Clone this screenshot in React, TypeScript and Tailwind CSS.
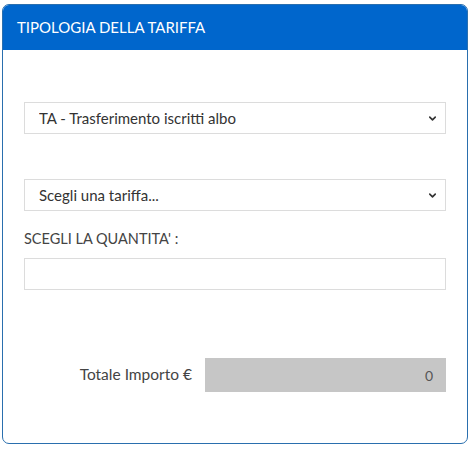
import { ChevronDown } from "lucide-react";

function SelectBox({ value }: { value: string }) {
  return (
    <div className="relative">
      <select
        className="w-full h-[32px] appearance-none bg-white border border-[#dcdcdc] pl-[14px] pr-8 text-[15px] text-[#333] outline-none"
        defaultValue={value}
      >
        <option value={value}>{value}</option>
      </select>
      <ChevronDown
        className="absolute right-[8px] top-[11px] pointer-events-none text-[#333]"
        size={11}
        strokeWidth={3.5}
      />
    </div>
  );
}

export default function App() {
  return (
    <div className="w-[476px] h-[452px] bg-white pt-[4px] pl-[2px]" style={{ fontFamily: "Lato, 'Open Sans', sans-serif" }}>
      <div className="w-[466px] h-[440px] border border-[#2a6fae] rounded-[7px] overflow-hidden flex flex-col">
        <div className="h-[45px] bg-[#0066cc] text-white text-[15px] pl-[14px] pt-[13px] leading-[18px]">
          TIPOLOGIA DELLA TARIFFA
        </div>
        <div className="px-[21px] pt-[52px]">
          <SelectBox value="TA - Trasferimento iscritti albo" />
          <div className="mt-[45px]">
            <SelectBox value="Scegli una tariffa..." />
          </div>
          <div className="mt-[18px] text-[14.5px] text-[#444] leading-[20px]">SCEGLI LA QUANTITA' :</div>
          <input type="text" className="mt-[9px] w-full h-[32px] border border-[#dcdcdc] outline-none px-3" />
          <div className="mt-[68px] flex items-center">
            <div className="w-[168px] text-right text-[15.5px] text-[#444]">Totale Importo €</div>
            <div className="ml-[13px] flex-1 h-[34px] bg-[#c6c6c6] flex items-center justify-end pr-[13px] text-[14px] text-[#555]">
              0
            </div>
          </div>
        </div>
      </div>
    </div>
  );
}
